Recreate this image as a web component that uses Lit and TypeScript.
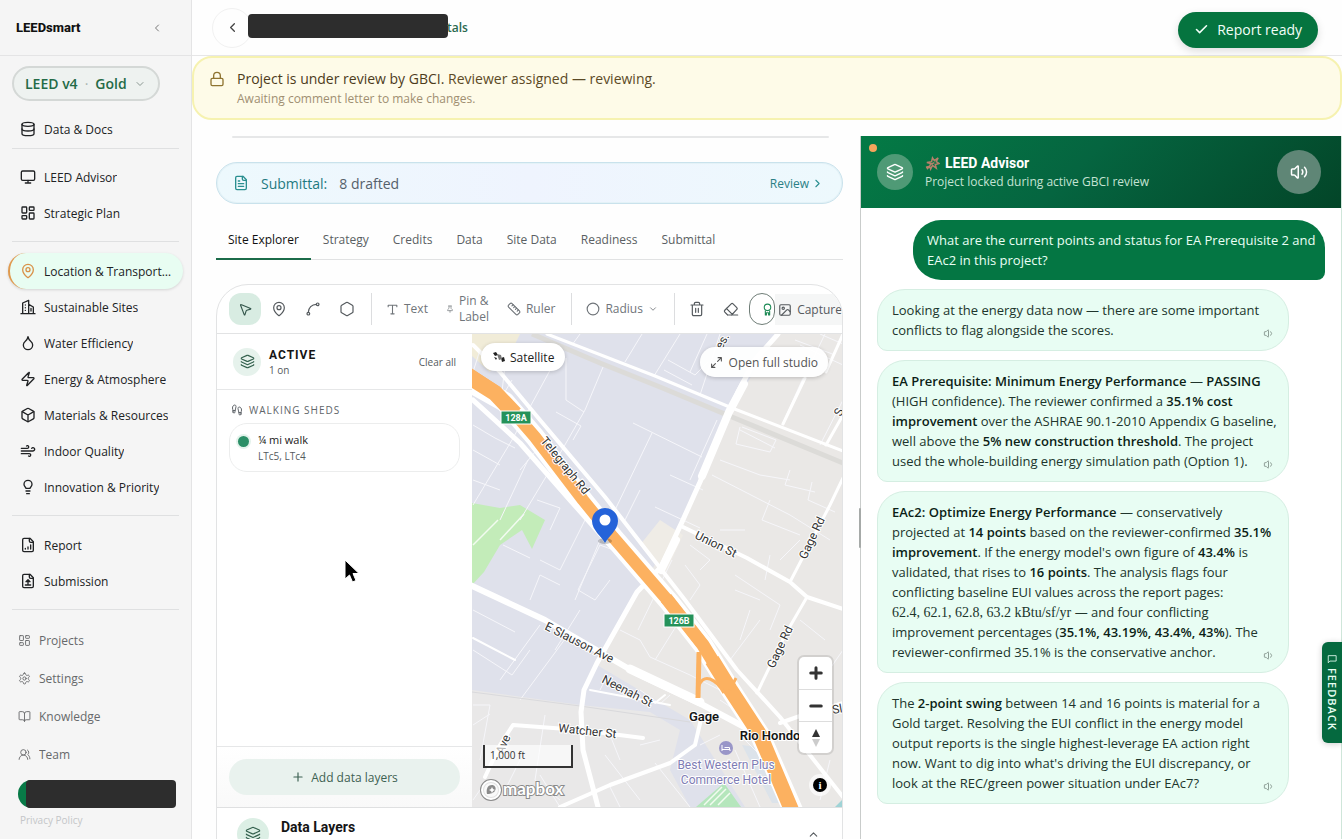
import { LitElement, html, svg, css, TemplateResult } from "lit";
import { customElement } from "lit/decorators.js";
import { classMap } from "lit/directives/class-map.js";

const icons: Record<string, TemplateResult> = {
  database: svg`<ellipse cx="12" cy="5" rx="9" ry="3"/><path d="M3 5v14c0 1.7 4 3 9 3s9-1.3 9-3V5"/><path d="M3 12c0 1.7 4 3 9 3s9-1.3 9-3"/>`,
  monitor: svg`<rect x="2" y="3" width="20" height="14" rx="2"/><path d="M8 21h8M12 17v4"/>`,
  dashboard: svg`<rect x="3" y="3" width="7" height="9" rx="1"/><rect x="14" y="3" width="7" height="5" rx="1"/><rect x="14" y="12" width="7" height="9" rx="1"/><rect x="3" y="16" width="7" height="5" rx="1"/>`,
  pin: svg`<path d="M20 10c0 5-5.5 10.2-7.4 11.8a1 1 0 0 1-1.2 0C9.5 20.2 4 15 4 10a8 8 0 0 1 16 0"/><circle cx="12" cy="10" r="3"/>`,
  building: svg`<path d="M1.5 22h21M4 22V6l9-4v20M13 8l7 4v10"/><path d="M8 9v.1M8 13v.1M8 17v.1M16.5 14v4" />`,
  drop: svg`<path d="M12 22a7 7 0 0 0 7-7c0-2-1-3.9-3-5.5S12.5 5 12 2.5C11.5 5 10 7.9 8 9.5S5 13 5 15a7 7 0 0 0 7 7z"/>`,
  zap: svg`<path d="M4 14a1 1 0 0 1-.78-1.63l9.9-10.2a.5.5 0 0 1 .86.46l-1.92 6.02A1 1 0 0 0 13 10h7a1 1 0 0 1 .78 1.63l-9.9 10.2a.5.5 0 0 1-.86-.46l1.92-6.02A1 1 0 0 0 11 14z"/>`,
  box: svg`<path d="M21 8a2 2 0 0 0-1-1.73l-7-4a2 2 0 0 0-2 0l-7 4A2 2 0 0 0 3 8v8a2 2 0 0 0 1 1.73l7 4a2 2 0 0 0 2 0l7-4A2 2 0 0 0 21 16Z"/><path d="m3.3 7 8.7 5 8.7-5M12 22V12"/>`,
  wind: svg`<path d="M12.8 19.6A2 2 0 1 0 14 16H2"/><path d="M17.5 8a2.5 2.5 0 1 1 2 4H2"/><path d="M9.8 4.4A2 2 0 1 1 11 8H2"/>`,
  bulb: svg`<path d="M15 14c.2-1 .7-1.7 1.5-2.5C17.5 10.6 18 9.5 18 8A6 6 0 0 0 6 8c0 1 .2 2.2 1.5 3.5.7.7 1.3 1.5 1.5 2.5zM9 18h6M10 22h4"/>`,
  fileChart: svg`<path d="M15 2H6a2 2 0 0 0-2 2v16a2 2 0 0 0 2 2h12a2 2 0 0 0 2-2V7Z"/><path d="M14 2v4a2 2 0 0 0 2 2h4M8 18v-1M12 18v-3M16 18v-6"/>`,
  fileUp: svg`<path d="M15 2H6a2 2 0 0 0-2 2v16a2 2 0 0 0 2 2h12a2 2 0 0 0 2-2V7Z"/><path d="M14 2v4a2 2 0 0 0 2 2h4M9 13l3-3 3 3H9M12 13v4M8 18h8"/>`,
  fileText: svg`<path d="M15 2H6a2 2 0 0 0-2 2v16a2 2 0 0 0 2 2h12a2 2 0 0 0 2-2V7Z"/><path d="M14 2v4a2 2 0 0 0 2 2h4M10 9H8M16 13H8M16 17H8"/>`,
  gear: svg`<path d="M12.2 2h-.4a2 2 0 0 0-2 2v.2a2 2 0 0 1-1 1.7l-.4.3a2 2 0 0 1-2 0l-.2-.1a2 2 0 0 0-2.7.7l-.2.4a2 2 0 0 0 .7 2.7l.2.1a2 2 0 0 1 1 1.7v.5a2 2 0 0 1-1 1.8l-.2.1a2 2 0 0 0-.7 2.7l.2.4a2 2 0 0 0 2.7.7l.2-.1a2 2 0 0 1 2 0l.4.3a2 2 0 0 1 1 1.7v.2a2 2 0 0 0 2 2h.4a2 2 0 0 0 2-2v-.2a2 2 0 0 1 1-1.7l.4-.3a2 2 0 0 1 2 0l.2.1a2 2 0 0 0 2.7-.7l.2-.4a2 2 0 0 0-.7-2.7l-.2-.1a2 2 0 0 1-1-1.8v-.5a2 2 0 0 1 1-1.7l.2-.1a2 2 0 0 0 .7-2.7l-.2-.4a2 2 0 0 0-2.7-.7l-.2.1a2 2 0 0 1-2 0l-.4-.3a2 2 0 0 1-1-1.7V4a2 2 0 0 0-2-2z"/><circle cx="12" cy="12" r="3"/>`,
  book: svg`<path d="M12 7v14M3 18a1 1 0 0 1-1-1V4a1 1 0 0 1 1-1h5a4 4 0 0 1 4 4 4 4 0 0 1 4-4h5a1 1 0 0 1 1 1v13a1 1 0 0 1-1 1h-6a3 3 0 0 0-3 3 3 3 0 0 0-3-3z"/>`,
  users: svg`<path d="M18 21a8 8 0 0 0-16 0"/><circle cx="10" cy="8" r="5"/><path d="M22 20c0-3.4-2-6.5-4-8a5 5 0 0 0-.5-8.3"/>`,
  left: svg`<path d="m15 18-6-6 6-6"/>`,
  right: svg`<path d="m9 18 6-6-6-6"/>`,
  down: svg`<path d="m6 9 6 6 6-6"/>`,
  up: svg`<path d="m18 15-6-6-6 6"/>`,
  check: svg`<path d="M20 6 9 17l-5-5"/>`,
  lock: svg`<rect x="3" y="11" width="18" height="11" rx="2"/><path d="M7 11V7a5 5 0 0 1 10 0v4"/>`,
  cursor: svg`<path d="M4 4.7a.5.5 0 0 1 .7-.6l15.5 6.3a.5.5 0 0 1 0 .95l-6 1.9a2 2 0 0 0-1.3 1.3l-1.9 6a.5.5 0 0 1-.95 0z"/>`,
  route: svg`<circle cx="19" cy="5" r="2"/><circle cx="5" cy="19" r="2"/><path d="M5 17A12 12 0 0 1 17 5"/>`,
  hexagon: svg`<path d="M21 16V8a2 2 0 0 0-1-1.73l-7-4a2 2 0 0 0-2 0l-7 4A2 2 0 0 0 3 8v8a2 2 0 0 0 1 1.73l7 4a2 2 0 0 0 2 0l7-4A2 2 0 0 0 21 16z"/>`,
  type: svg`<path d="M4 7V4h16v3M9 20h6M12 4v16"/>`,
  pushpin: svg`<path d="M12 17v5M8 3h8M9 3v7l-4 4v3h14v-3l-4-4V3"/>`,
  ruler: svg`<path d="M21.3 15.3a2.4 2.4 0 0 1 0 3.4l-2.6 2.6a2.4 2.4 0 0 1-3.4 0L2.7 8.7a2.4 2.4 0 0 1 0-3.4l2.6-2.6a2.4 2.4 0 0 1 3.4 0z"/><path d="M14.5 12.5l2-2M11.5 9.5l2-2M8.5 6.5l2-2M17.5 15.5l2-2"/>`,
  circle: svg`<circle cx="12" cy="12" r="10"/>`,
  trash: svg`<path d="M3 6h18M19 6v14a2 2 0 0 1-2 2H7a2 2 0 0 1-2-2V6M8 6V4a2 2 0 0 1 2-2h4a2 2 0 0 1 2 2v2M10 11v6M14 11v6"/>`,
  eraser: svg`<path d="m7 21-4.3-4.3a2 2 0 0 1 0-2.8l9.6-9.6a2 2 0 0 1 2.8 0l5.6 5.6a2 2 0 0 1 0 2.8L13 21M22 21H7M5 11l9 9"/>`,
  award: svg`<path d="M8 14.5V22h2v-4h4v4h2v-7.5"/><circle cx="12" cy="8" r="6"/>`,
  image: svg`<rect x="3" y="3" width="18" height="18" rx="2"/><circle cx="9" cy="9" r="2"/><path d="m21 15-3.1-3.1a2 2 0 0 0-2.8 0L6 21"/>`,
  layers: svg`<path d="M12.8 2.2a2 2 0 0 0-1.6 0L2.6 6.1a1 1 0 0 0 0 1.8l8.6 3.9a2 2 0 0 0 1.6 0l8.6-3.9a1 1 0 0 0 0-1.8z"/><path d="M2 12a1 1 0 0 0 .6.9l8.6 3.9a2 2 0 0 0 1.6 0l8.6-3.9a1 1 0 0 0 .6-.9M2 17a1 1 0 0 0 .6.9l8.6 3.9a2 2 0 0 0 1.6 0l8.6-3.9a1 1 0 0 0 .6-.9"/>`,
  feet: svg`<path d="M4 16v-2.4C4 11.5 3 10.5 3 8c0-2.7 1.5-6 4.5-6C9.4 2 10 3.8 10 5.5c0 3.1-2 5.7-2 8.7V16a2 2 0 1 1-4 0ZM20 20v-2.4c0-2.1 1-3.1 1-5.6 0-2.7-1.5-6-4.5-6C14.6 6 14 7.8 14 9.5c0 3.1 2 5.7 2 8.7V20a2 2 0 1 0 4 0ZM16 17h4M4 13h4"/>`,
  expand: svg`<path d="M15 3h6v6M21 3l-7 7M9 21H3v-6M3 21l7-7"/>`,
  plus: svg`<path d="M5 12h14M12 5v14"/>`,
  minus: svg`<path d="M5 12h14"/>`,
  sound: svg`<path d="M11 4.7a.7.7 0 0 0-1.2-.5L6.4 7.6A1.4 1.4 0 0 1 5.4 8H3a1 1 0 0 0-1 1v6a1 1 0 0 0 1 1h2.4a1.4 1.4 0 0 1 1 .4l3.4 3.4a.7.7 0 0 0 1.2-.5zM16 9a5 5 0 0 1 0 6M19.4 18.4a9 9 0 0 0 0-12.8"/>`,
  soundLow: svg`<path d="M12 4.7a.7.7 0 0 0-1.2-.5L7.4 7.6A1.4 1.4 0 0 1 6.4 8H4a1 1 0 0 0-1 1v6a1 1 0 0 0 1 1h2.4a1.4 1.4 0 0 1 1 .4l3.4 3.4a.7.7 0 0 0 1.2-.5zM17 8a5.5 5.5 0 0 1 0 8"/>`,
  message: svg`<path d="M21 17H7l-4 4V4h18z"/>`,
};

const icon = (name: string, size = 16, weight = 2) => html`<svg
  width=${size} height=${size} viewBox="0 0 24 24" fill="none" stroke="currentColor"
  stroke-width=${weight} stroke-linecap="round" stroke-linejoin="round" aria-hidden="true"
>${icons[name]}</svg>`;

const base = css`
  :host { box-sizing: border-box; font-family: "Open Sans", "Liberation Sans", sans-serif; }
  *, *::before, *::after { box-sizing: border-box; }
  svg { display: block; flex: none; }
  button { font: inherit; color: inherit; background: none; border: 0; padding: 0; margin: 0; cursor: pointer; }
  a { color: inherit; text-decoration: none; }
  h1, h2, h3, p { margin: 0; font: inherit; }
`;

@customElement("side-nav")
class SideNav extends LitElement {
  static styles = [base, css`
    :host { display: flex; flex-direction: column; background: #f5f5f5; border-right: 1px solid #e4e4e5; overflow: hidden; }
    .brand { display: flex; align-items: center; justify-content: space-between; height: 56px; flex: none; padding: 0 28px 0 16px; border-bottom: 1px solid #e4e4e5; }
    .brand b { font: 800 13px Roboto, sans-serif; color: #111; }
    .brand button { color: #777; }
    .rating { display: flex; align-items: center; gap: 7px; align-self: flex-start; height: 35px; flex: none; margin: 10px 12px; padding: 0 12px 0 11px; border: 2px solid #d4d8d6; border-radius: 18px; background: #eef2f0; color: #246b47; font-size: 14px; font-weight: 600; }
    .rating .dot { color: #a9b5af; font-weight: 400; }
    .rating svg { color: #8a9791; }
    .group { display: flex; flex-direction: column; padding: 0 8px; }
    hr { height: 1px; flex: none; border: 0; background: #dfe0e1; margin: 10px 12px 11px; }
    .tight { margin: 1px 12px 10px; }
    .item { display: flex; align-items: center; gap: 8px; height: 36px; padding: 0 8px 0 12px; font-size: 12px; font-weight: 500; color: #202224; border-radius: 18px; white-space: nowrap; }
    .item span { overflow: hidden; text-overflow: ellipsis; }
    .active { background: #e8fdf2; box-shadow: 0 1px 3px #0002; border-left: 2px solid #e09a4e; padding-left: 10px; }
    .active svg { color: #d9924a; }
    .minor .item { height: 38px; padding: 0 10px; color: #67696b; font-weight: 400; }
    .account { display: flex; height: 28px; flex: none; margin: 7px 15px 6px 18px; background: linear-gradient(90deg, #087a47 14px, transparent 14px); border-radius: 14px 0 0 14px; }
    .mask { flex: 1; align-self: stretch; margin-left: 8px; background: #2d2d2d; border-radius: 4px; }
    .privacy { font-size: 10px; line-height: 12px; color: #c4c6c8; padding-left: 20px; }
  `];
  item(ic: string, label: string, on = false, size = 16) {
    return html`<a href="#" class=${classMap({ item: true, active: on })}>${icon(ic, size, size < 16 ? 1.7 : 2)}<span>${label}</span></a>`;
  }
  render() {
    return html`
      <div class="brand"><b>LEEDsmart</b><button aria-label="Collapse sidebar">${icon("left", 12)}</button></div>
      <button class="rating">LEED v4 <span class="dot">·</span> Gold ${icon("down", 12)}</button>
      <nav class="group">${this.item("database", "Data & Docs")}</nav>
      <hr class="tight" />
      <nav class="group">${this.item("monitor", "LEED Advisor")}${this.item("dashboard", "Strategic Plan")}</nav>
      <hr />
      <nav class="group">
        ${this.item("pin", "Location & Transport…", true)}
        ${this.item("building", "Sustainable Sites")}
        ${this.item("drop", "Water Efficiency")}
        ${this.item("zap", "Energy & Atmosphere")}
        ${this.item("box", "Materials & Resources")}
        ${this.item("wind", "Indoor Quality")}
        ${this.item("bulb", "Innovation & Priority")}
      </nav>
      <hr />
      <nav class="group">${this.item("fileChart", "Report")}${this.item("fileUp", "Submission")}</nav>
      <hr />
      <nav class="group minor">
        ${this.item("dashboard", "Projects", false, 13)}
        ${this.item("gear", "Settings", false, 13)}
        ${this.item("book", "Knowledge", false, 13)}
        ${this.item("users", "Team", false, 13)}
      </nav>
      <button class="account" aria-label="Account"><span class="mask"></span></button>
      <a class="privacy" href="#">Privacy Policy</a>
    `;
  }
}

const minorRoads = [
  "M473 372 480 350M505 365 500 410M512 380 500 400M560 352 512 440 473 505M603 367 585 410 562 450 520 520M580 334 572 345M566 358 566 400 584 412M556 412 581 426 573 440",
  "M642 334 625 362M680 334 654 376M707 334 690 372M668 360 695 375 708 362M664 370 692 385M720 334 700 395",
  "M633 423 702 457M652 433 615 510M717 420 690 480M670 475 703 490M640 490 625 520M655 507 700 528",
  "M473 425 495 438 515 448M473 450 500 465M528 460 500 520M473 480 500 490M545 440 520 470M537 500 560 508 550 530",
  "M740 430 775 448M740 427 736 444 770 452 776 440 742 427M720 460 760 475 790 480M790 470 785 485 815 492M712 475 790 515 830 540M770 500 762 520 800 535M812 482 808 500 835 512",
  "M843 365 800 345M795 340 835 355M820 334 843 344M825 334 810 365M803 378 782 425M843 400 820 445M770 360 790 370",
  "M473 610 515 632M473 650 512 675 530 650M540 625 500 680M568 635 520 700M555 650 580 610M610 580 595 600 578 590 600 545 640 560M560 585 540 575 530 600M585 520 560 570 540 560M503 545 530 558M600 540 575 600",
  "M473 705 490 705 480 760M490 714 473 725M545 715 535 780 560 800M610 735 620 760M605 755 640 800M655 763 690 807M610 787 620 807M540 775 560 807M520 760 505 790M480 790 473 800",
  "M620 630 640 640 650 657 690 675 720 690M655 660 680 620M638 630 672 560M690 545 710 560 700 570M720 530 745 530M685 565 700 585 690 600M735 590 760 600M750 610 740 640M760 620 730 660M735 575 780 605 770 630M765 580 770 555M780 560 800 540",
  "M600 690 605 680M640 690 660 704 670 695M720 700 735 710M700 745 720 735M640 745 660 740M735 750 760 807M745 740 775 770M830 760 820 800M800 620 825 640M843 650 815 690",
];

@customElement("site-map")
class SiteMap extends LitElement {
  static styles = [base, css`
    :host { display: block; position: relative; overflow: hidden; background: #e3e4ec; min-width: 0; }
    .canvas { position: absolute; inset: 0; width: 100%; height: 100%; }
    .road { fill: none; stroke: #fff; stroke-linejoin: round; stroke-linecap: round; }
    .minor { fill: none; stroke: #f6f6fa; stroke-width: 1; }
    .street { font: 12px Roboto, sans-serif; fill: #333; stroke: #fff; stroke-width: 2px; paint-order: stroke; }
    .place { font: 600 13px Roboto, sans-serif; fill: #151515; stroke: #fff; stroke-width: 2px; paint-order: stroke; text-anchor: middle; }
    .hotel { font: 12px Roboto, sans-serif; fill: #7e7cb4; stroke: #fff; stroke-width: 2px; paint-order: stroke; text-anchor: middle; }
    .exit { font: 700 9px Roboto, sans-serif; fill: #fff; text-anchor: middle; }
    .logo { font: 700 17px Lato, sans-serif; fill: #fff; stroke: #8b8b8b; stroke-width: 2px; paint-order: stroke; }
    .pill { position: absolute; display: flex; align-items: center; gap: 6px; background: #fff; border-radius: 16px; font-size: 12px; box-shadow: 0 1px 4px #0003; white-space: nowrap; }
    .satellite { left: 9px; top: 9px; height: 28px; padding: 0 11px; color: #222; font-weight: 500; gap: 4px; }
    .studio { right: 14px; top: 13px; height: 30px; padding: 0 10px; color: #555; background: #fffffff0; }
    .zoom { position: absolute; right: 10px; bottom: 54px; width: 33px; background: #fff; border-radius: 5px; box-shadow: 0 0 0 2px #0000001a; color: #333; }
    .zoom button { display: grid; place-items: center; width: 100%; height: 32px; }
    .zoom button + button { border-top: 1px solid #ddd; }
    .scale { position: absolute; left: 11px; bottom: 39px; width: 90px; height: 23px; border: 2px solid #333; border-top: 0; background: #ffffffa0; font-size: 10px; line-height: 21px; padding-left: 5px; color: #333; }
    .info { position: absolute; right: 15px; bottom: 15px; width: 14px; height: 14px; border-radius: 50%; background: #000; color: #fff; font: 700 11px/14px "Liberation Serif", serif; text-align: center; box-shadow: 0 0 0 4px #fffa; }
  `];
  render() {
    return html`
      <svg class="canvas" viewBox="472 334 371 473" preserveAspectRatio="xMinYMin slice" role="img" aria-label="Map of the project site">
        <rect x="472" y="334" width="371" height="473" fill="#dfe1eb"/>
        <path d="M775 334 735 405 690 505 637 595 597 665 690 720 745 807H900V334z" fill="#eae8e6"/>
        <path d="M472 690 580 705 650 712 680 730 670 770 690 807H472z" fill="#e9e8e8"/>
        <path d="M472 334h48l-8 16-16 6-6 16-18-16z" fill="#f1ecd8"/>
        <path d="M640 545 660 520 683 535 665 575z" fill="#efece6"/>
        <path d="M472 503 500 508 520 505 545 520 532 549 522 530 500 545 484 572 472 585z" fill="#c3ecb9"/>
        <path d="M696 807 724 783 741 807z" fill="#b5e6bc"/>
        <path d="M704 805 722 787M710 805 726 789M718 805 730 793M473 545 498 520M500 540 524 514" stroke="#f2fbf0" stroke-width="1.5"/>
        <path d="M835 807l8-8v8z" fill="#9fd3d6"/>
        <path d="M742 745l22 3 20 55h-12z" fill="#dce3ea"/>
        ${minorRoads.map((d) => svg`<path class="minor" d=${d}/>`)}
        <path d="M532 334 600 363 660 387 732 417 843 463" fill="none" stroke="#dcdbd8" stroke-width="5"/>
        <path d="M472 692 580 706 690 722" fill="none" stroke="#d9d9dc" stroke-width="1"/>
        <g class="road">
          <path d="M547 334 655 376 732 408 843 451" stroke-width="3"/>
          <path d="M778 334 755 360 738 392 729 412 700 482 682 522 661 567 637 592 597 663 584 690 581 712 583 750 598 807" stroke-width="5"/>
          <path d="M744 384 729 412 702 476M676 540 661 570" stroke-width="8"/>
          <path d="M470 585 545 620 600 652 636 673 703 705 750 730" stroke-width="6"/>
          <path d="M630 669 700 702" stroke-width="9"/>
          <path d="M683 527 747 558 790 582 807 597 843 609" stroke-width="4"/>
          <path d="M843 478 830 505 790 582M807 597 785 635 757 693" stroke-width="3"/>
          <path d="M485 777 500 745 513 725 580 730 643 738" stroke-width="4"/>
          <path d="M560 807 610 785 670 763 695 745 702 715" stroke-width="4"/>
          <path d="M780 723 800 716 843 703" stroke-width="4"/>
          <path d="M843 334 826 372M805 378 783 424M843 415 826 445" stroke-width="3"/>
          <path d="M590 690 670 705M655 703 665 695M473 638 515 660" stroke-width="2"/>
          <path d="M473 345 500 372 540 420 605 497 685 600 737 670 780 717 843 797" stroke-width="4"/>
          <path d="M473 384 505 402 535 437 583 500 613 537 670 603 703 645 730 689 760 735 795 815" stroke-width="20"/>
          <path d="M473 400 520 443 570 500 610 545" stroke-width="5"/>
        </g>
        <g fill="none" stroke="#fcb160" stroke-linejoin="round">
          <path d="M465 371 495 391 535 437 583 500 613 537 670 603 703 645" stroke-width="12"/>
          <path d="M465 374 495 393 515 414" stroke-width="16"/>
          <path d="M666 598 703 645 730 689 760 735 797 823" stroke-width="13"/>
          <path d="M712 660 730 689 760 735 797 823" stroke-width="15"/>
          <path d="M699 652 698 698" stroke-width="5"/>
          <path d="M698 688q4-12 12-9t14 14" stroke-width="3"/>
          <path d="M730 690 736 678" stroke-width="3"/>
        </g>
        <rect x="501" y="411" width="30" height="13" fill="#25925a" stroke="#fff" stroke-width="1"/>
        <text class="exit" x="516" y="421">128A</text>
        <rect x="664" y="614" width="30" height="13" fill="#25925a" stroke="#fff" stroke-width="1"/>
        <text class="exit" x="679" y="624">126B</text>
        <text class="street" transform="translate(540 441) rotate(51)">Telegraph Rd</text>
        <text class="street" transform="translate(694 538) rotate(26)">Union St</text>
        <text class="street" transform="translate(806 560) rotate(-65)">Gage Rd</text>
        <text class="street" transform="translate(774 669) rotate(-65)">Gage Rd</text>
        <text class="street" transform="translate(544 629) rotate(27)">E Slauson Ave</text>
        <text class="street" transform="translate(601 682) rotate(27)">Neenah St</text>
        <text class="street" transform="translate(558 732) rotate(6)">Watcher St</text>
        <text class="street" transform="translate(503 755) rotate(-67)">Ave</text>
        <text class="street" transform="translate(722 350) rotate(-62)">es.</text>
        <text class="street" transform="translate(841 417) rotate(-65)">S</text>
        <text class="street" transform="translate(833 714) rotate(-10)">Sl</text>
        <text class="place" x="704" y="721">Gage</text>
        <text class="place" x="770" y="740">Rio Hondo</text>
        <circle cx="726" cy="748" r="7" fill="#9996c8"/>
        <path d="M722 745v6M722 749.5h8v1.5M724.5 747.5h5v2" stroke="#fff" fill="none"/>
        <text class="hotel" x="726" y="769">Best Western Plus</text>
        <text class="hotel" x="726" y="784">Commerce Hotel</text>
        <ellipse cx="605" cy="541" rx="7" ry="3" fill="#0003"/>
        <path d="M605 543c-3-6-13-13-13-22a13 13 0 0 1 26 0c0 9-10 16-13 22z" fill="#2563d9"/>
        <circle cx="605" cy="520" r="5.5" fill="#fff"/>
        <circle cx="491" cy="790" r="9" fill="none" stroke="#8b8b8b" stroke-width="4"/>
        <circle cx="491" cy="790" r="9" fill="#ffffffc0" stroke="#fff" stroke-width="2"/>
        <path d="M487 794c-1-4 0-9 5-9s6 9-5 9z" fill="#8b8b8b"/><path d="M492 787l1 2 2 1-2 1-1 2-1-2-2-1 2-1z" fill="#fff"/>
        <text class="logo" x="503" y="795">mapbox</text>
      </svg>
      <button class="pill satellite">
        <svg width="14" height="14" viewBox="0 0 14 14" fill="#222"><path d="M1 3l3-1 2 3-3 1zM9 8l3-1 1 4-3 1z"/><path d="M5 4l4 1 1 4-3 1z" fill="#777"/><path d="M2 7l3 1-1 2z"/></svg>
        Satellite</button>
      <button class="pill studio">${icon("expand", 13)}Open full studio</button>
      <div class="scale">1,000 ft</div>
      <div class="zoom">
        <button aria-label="Zoom in">${icon("plus", 18, 4)}</button>
        <button aria-label="Zoom out">${icon("minus", 18, 4)}</button>
        <button aria-label="Reset bearing"><svg width="10" height="20" viewBox="0 0 10 20"><path d="M5 1l4 8H1z" fill="#333"/><path d="M5 19l4-8H1z" fill="#ccc"/></svg></button>
      </div>
      <button class="info" aria-label="Map attribution">i</button>
    `;
  }
}

@customElement("site-explorer")
class SiteExplorer extends LitElement {
  static styles = [base, css`
    :host { display: block; border: 1px solid #e2e3e4; border-radius: 32px 32px 0 0; overflow: hidden; background: #fff; color: #555a5e; }
    .toolbar { position: relative; display: flex; align-items: center; height: 49px; padding: 0 12px; border-bottom: 1px solid #e2e3e4; font-size: 12px; white-space: nowrap; }
    .tool { display: grid; place-items: center; width: 32px; height: 32px; margin-right: 2px; border-radius: 12px; flex: none; }
    .on { background: #d8ece2; color: #32554a; }
    .sep { width: 1px; height: 32px; background: #dcdddf; margin: 0 6px; flex: none; }
    .labelled { display: flex; align-items: center; gap: 5px; padding: 0 8px; margin-right: 2px; text-align: left; color: #70757a; line-height: 16px; }
    .credit { display: flex; align-items: center; justify-content: flex-end; width: 26px; height: 32px; border: 1px solid #6f7d77; border-radius: 13px; color: #1d8a55; flex: none; }
    .capture { position: absolute; right: 0; top: 9px; height: 31px; display: flex; align-items: center; gap: 5px; padding: 0 0 0 3px; background: #f5f6f6; color: #555a5e; }
    .body { display: grid; grid-template-columns: 255px minmax(0, 1fr); min-height: 474px; border-bottom: 1px solid #dfe0e1; }
    .layers { display: flex; flex-direction: column; }
    .head { display: flex; align-items: center; gap: 8px; height: 56px; padding: 0 16px; border-bottom: 1px solid #e6e7e8; font-size: 10px; }
    .badge { display: grid; place-items: center; width: 28px; height: 28px; border-radius: 50%; background: #e6f2ec; color: #33604d; flex: none; }
    .head h3 { font: 700 12px/16px Roboto, sans-serif; letter-spacing: 1px; color: #151515; }
    .grow { flex: 1; }
    .section { display: flex; align-items: center; gap: 6px; font-size: 10px; font-weight: 500; letter-spacing: 1px; margin: 14px 14px 7px; line-height: 12px; color: #60656a; }
    .shed { display: flex; align-items: center; gap: 9px; margin: 0 12px; height: 49px; padding: 0 8px; border: 1px solid #eceded; border-radius: 18px; font-size: 10px; line-height: 16px; text-align: left; }
    .shed b { display: block; font-size: 11px; font-weight: 500; color: #1a1a1a; }
    .dot { width: 11px; height: 11px; border-radius: 50%; background: #2b8f67; box-shadow: 0 0 0 2px #e4f3ec; align-self: flex-start; margin-top: 12px; }
    .foot { margin-top: auto; border-top: 1px solid #e6e7e8; padding: 12px; background: linear-gradient(#fff, #f9f9f9); }
    .add { display: flex; align-items: center; justify-content: center; gap: 6px; width: 100%; height: 36px; border-radius: 18px; background: #e9f2ee; color: #3d6152; font-size: 12px; }
    .data { display: flex; align-items: flex-start; gap: 12px; width: 100%; height: 52px; padding: 10px 22px 0 20px; text-align: left; }
    .data b { font: 700 14px/18px Roboto, sans-serif; color: #151515; }
    .data .badge { width: 32px; height: 32px; }
    .data > svg { margin-top: 10px; }
    .minty { background: #dcefe5; }
  `];
  render() {
    return html`
      <div class="toolbar" role="toolbar">
        <button class="tool on" aria-label="Select">${icon("cursor", 15, 1.8)}</button>
        <button class="tool" aria-label="Pin">${icon("pin", 16, 1.8)}</button>
        <button class="tool" aria-label="Line">${icon("route", 16, 1.8)}</button>
        <button class="tool" aria-label="Polygon">${icon("hexagon", 16, 1.8)}</button>
        <span class="sep"></span>
        <button class="labelled">${icon("type", 13)}Text</button>
        <button class="labelled">${icon("pushpin", 8)}<span>Pin &amp;<br />Label</span></button>
        <button class="labelled">${icon("ruler", 14)}Ruler</button>
        <span class="sep"></span>
        <button class="labelled">${icon("circle", 14)}Radius ${icon("down", 10)}</button>
        <span class="sep"></span>
        <button class="tool" aria-label="Delete">${icon("trash", 16, 1.8)}</button>
        <button class="tool" aria-label="Erase">${icon("eraser", 16, 1.8)}</button>
        <button class="credit" aria-label="Credit">${icon("award", 13)}</button>
        <button class="capture">${icon("image", 14)}Capture</button>
      </div>
      <div class="body">
        <div class="layers">
          <div class="head">
            <span class="badge">${icon("layers", 15, 1.8)}</span>
            <div class="grow"><h3>ACTIVE</h3>1 on</div>
            <button>Clear all</button>
          </div>
          <h3 class="section">${icon("feet", 12)}WALKING SHEDS</h3>
          <button class="shed"><span class="dot"></span><span><b>¼ mi walk</b>LTc5, LTc4</span></button>
          <div class="foot"><button class="add">${icon("plus", 14)}Add data layers</button></div>
        </div>
        <site-map></site-map>
      </div>
      <button class="data"><span class="badge minty">${icon("layers", 16, 1.8)}</span><b class="grow">Data Layers</b>${icon("up", 13)}</button>
    `;
  }
}

@customElement("advisor-chat")
class AdvisorChat extends LitElement {
  static styles = [base, css`
    :host { display: flex; flex-direction: column; background: #fff; border-left: 1px solid #c9cccb; border-right: 1px solid #cfe6da; min-height: 0; }
    .head { position: relative; display: flex; align-items: center; gap: 12px; height: 72px; flex: none; padding: 0 20px 0 16px; background: linear-gradient(135deg, #047a45 0%, #056540 45%, #034528 100%); color: #fff; }
    .status { position: absolute; left: 8px; top: 8px; width: 8px; height: 8px; border-radius: 50%; background: #f5a55c; }
    .avatar { display: grid; place-items: center; width: 36px; height: 36px; border-radius: 50%; background: #4f9a76; flex: none; }
    .title { flex: 1; font-size: 12px; line-height: 18px; color: #c4e2d3; }
    .title h2 { display: flex; align-items: center; gap: 5px; font: 700 14px/20px Roboto, sans-serif; color: #fff; }
    .voice { display: grid; place-items: center; width: 44px; height: 44px; border-radius: 50%; background: #5f8676; }
    .log { display: flex; flex-direction: column; gap: 9px; padding: 12px 16px; font-size: 13px; line-height: 20px; }
    .user { align-self: flex-end; width: 412px; padding: 10px 0 10px 14px; border-radius: 28px 28px 8px 28px; background: #047643; color: #e9fff4; }
    .reply { position: relative; width: 412px; padding: 10px 14px; border: 1px solid #d5eee2; border-radius: 28px 28px 28px 10px; background: #e8fdf3; color: #20352c; white-space: nowrap; }
    .reply b { font-weight: 600; color: #0c1f17; }
    .listen { position: absolute; right: 14px; bottom: 11px; color: #84958d; }
    .math { font: 14px "Liberation Serif", serif; line-height: 1; }
  `];
  reply(body: TemplateResult) {
    return html`<div class="reply">${body}<button class="listen" aria-label="Listen">${icon("soundLow", 11)}</button></div>`;
  }
  render() {
    return html`
      <header class="head">
        <span class="status"></span>
        <span class="avatar">${icon("layers", 18)}</span>
        <div class="title">
          <h2><svg width="15" height="15" viewBox="0 0 16 16" fill="none" stroke="#b5816a" stroke-width="1.6"><path d="M1 12l4-1 1-3-4-1 5-1 1-4 2 3 4-3-2 4 3 2-4 1 1 4-4-3-2 4-1-3-3 3M6 9l4-2"/></svg>LEED Advisor</h2>
          Project locked during active GBCI review
        </div>
        <button class="voice" aria-label="Voice">${icon("sound", 18)}</button>
      </header>
      <div class="log">
        <div class="user">What are the current points and status for EA Prerequisite 2 and<br />EAc2 in this project?</div>
        ${this.reply(html`Looking at the energy data now — there are some important<br />conflicts to flag alongside the scores.`)}
        ${this.reply(html`<b>EA Prerequisite: Minimum Energy Performance</b> — <b>PASSING</b><br />(HIGH confidence). The reviewer confirmed a <b>35.1% cost<br />improvement</b> over the ASHRAE 90.1-2010 Appendix G baseline,<br />well above the <b>5% new construction threshold</b>. The project<br />used the whole-building energy simulation path (Option 1).`)}
        ${this.reply(html`<b>EAc2: Optimize Energy Performance</b> — conservatively<br />projected at <b>14 points</b> based on the reviewer-confirmed <b>35.1%<br />improvement</b>. If the energy model's own figure of <b>43.4%</b> is<br />validated, that rises to <b>16 points</b>. The analysis flags four<br />conflicting baseline EUI values across the report pages:<br /><span class="math">62.4, 62.1, 62.8, 63.2 kBtu/sf/yr</span> — and four conflicting<br />improvement percentages (<b>35.1%, 43.19%, 43.4%, 43%</b>). The<br />reviewer-confirmed 35.1% is the conservative anchor.`)}
        ${this.reply(html`The <b>2-point swing</b> between 14 and 16 points is material for a<br />Gold target. Resolving the EUI conflict in the energy model<br />output reports is the single highest-leverage EA action right<br />now. Want to dig into what's driving the EUI discrepancy, or<br />look at the REC/green power situation under EAc7?`)}
      </div>
    `;
  }
}

@customElement("app-root")
class AppRoot extends LitElement {
  static styles = [base, css`
    :host { display: grid; grid-template-columns: 192px minmax(0, 1fr); height: 100vh; overflow: hidden; position: relative; background: #fefefe; }
    .main { display: flex; flex-direction: column; min-height: 0; }
    .top { display: flex; align-items: center; height: 56px; flex: none; padding: 0 24px 0 20px; border-bottom: 1px solid #e6e6e7; }
    .back { display: grid; place-items: center; width: 40px; height: 40px; border-radius: 50%; border: 1px solid #f1f1f1; color: #444; flex: none; }
    .mask { width: 200px; height: 24px; background: #2d2d2d; border-radius: 4px; margin: 0 0 4px -4px; }
    .crumb { flex: 1; font-size: 12px; font-weight: 600; color: #2a6a4f; margin-left: -1px; }
    .ready { display: flex; align-items: center; gap: 8px; height: 36px; padding: 0 16px; margin-top: 4px; border-radius: 18px; background: #05743f; color: #f2fff8; font-size: 14px; font-weight: 500; box-shadow: 0 3px 8px #0002; }
    .notice { display: flex; gap: 12px; height: 64px; flex: none; padding: 11px 15px; border: 2px solid #f6f2b0; border-radius: 20px; background: #fefbe8; color: #5c4a26; font-size: 14px; line-height: 20px; }
    .notice svg { color: #8f7431; margin-top: 2px; }
    .notice b { font-weight: 500; color: #4d3c1c; }
    .notice p { font-size: 12px; color: #a08f72; }
    .split { display: grid; grid-template-columns: minmax(0, 1fr) 482px; flex: 1; min-height: 0; padding-top: 16px; position: relative; }
    .work { padding: 0 17px 0 24px; overflow: hidden; }
    .rule { height: 2px; border: 0; margin: 0 14px 24px 16px; background: #e6e7e8; border-radius: 1px; }
    .submittal { display: flex; align-items: center; gap: 12px; height: 42px; padding: 0 18px 0 16px; border: 1px solid #c9e2ec; border-radius: 21px; background: linear-gradient(90deg, #edf9fd, #eff4fe 50%, #edf9fd); font-size: 14px; color: #55606b; box-shadow: 0 0 0 1px #e4f2f7 inset; }
    .submittal b { font-weight: 500; color: #1f7a80; }
    .submittal svg { color: #2a8f90; }
    .review { display: flex; align-items: center; gap: 2px; margin-left: auto; font-size: 12px; color: #2a8085; }
    .tabs { display: flex; margin-top: 16px; height: 40px; border-bottom: 1px solid #e1e2e3; }
    .tab { padding: 0 12px; height: 40px; font-size: 12px; color: #5a5f63; border-bottom: 2px solid transparent; white-space: nowrap; }
    .current { color: #111; font-weight: 500; border-color: #1b6b49; }
    site-explorer { margin-top: 24px; }
    .grip { position: absolute; right: 481px; top: 388px; width: 2px; height: 40px; background: #a6aaa8; border-radius: 2px; }
    .feedback { position: absolute; right: 0; top: 642px; display: flex; align-items: center; gap: 4px; writing-mode: vertical-rl; width: 20px; padding: 12px 0; border-radius: 6px 0 0 6px; background: #05693f; color: #e8fff4; font-size: 11px; font-weight: 600; letter-spacing: 1px; box-shadow: 0 1px 6px #0003; }
    .pointer { position: absolute; left: 343px; top: 559px; }
  `];
  render() {
    const tabs = ["Site Explorer", "Strategy", "Credits", "Data", "Site Data", "Readiness", "Submittal"];
    return html`
      <side-nav></side-nav>
      <main class="main">
        <header class="top">
          <button class="back" aria-label="Back">${icon("left", 15)}</button>
          <span class="mask"></span><span class="crumb">tals</span>
          <button class="ready">${icon("check", 15, 2.5)}Report ready</button>
        </header>
        <section class="notice">${icon("lock", 16)}<div><b>Project is under review by GBCI.</b> Reviewer assigned — reviewing.<p>Awaiting comment letter to make changes.</p></div></section>
        <div class="split">
          <section class="work">
            <hr class="rule" />
            <div class="submittal">${icon("fileText", 16)}<b>Submittal:</b><span>8 drafted</span><a href="#" class="review">Review ${icon("right", 13)}</a></div>
            <nav class="tabs">${tabs.map((t, i) => html`<button class=${classMap({ tab: true, current: i === 0 })}>${t}</button>`)}</nav>
            <site-explorer></site-explorer>
          </section>
          <advisor-chat></advisor-chat>
          <span class="grip"></span>
        </div>
      </main>
      <button class="feedback">${icon("message", 10)}FEEDBACK</button>
      <svg class="pointer" width="17" height="25" viewBox="0 0 17 25"><path d="M2 1v19l4.5-4 3 7 3.5-1.5-3-7H16z" fill="#000" stroke="#fff"/></svg>
    `;
  }
}
